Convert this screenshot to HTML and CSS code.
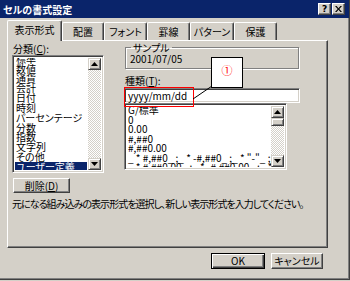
FILE: index.html
```html
<!DOCTYPE html>
<html lang="ja">
<head>
<meta charset="utf-8">
<title>セルの書式設定</title>
<link rel="stylesheet" href="styles.css">
</head>
<body>
<div class="window">
  <div class="titlebar">
    <span class="title">セルの書式設定</span>
    <div class="caption-btns">
      <span class="cap-btn help">?</span>
      <span class="cap-btn close"><svg width="7" height="6" viewBox="0 0 7 6"><path d="M0 0h1.6L3.5 2.2 5.4 0H7L4.3 3 7 6H5.4L3.5 3.8 1.6 6H0L2.7 3z" fill="#000"/></svg></span>
    </div>
  </div>

  <div class="tabs">
    <div class="tab active w1">表示形式</div>
    <div class="tab w2">配置</div>
    <div class="tab w3">フォント</div>
    <div class="tab w4">罫線</div>
    <div class="tab w5">パターン</div>
    <div class="tab w6">保護</div>
  </div>

  <div class="panel">
    <div class="top-row">
      <div class="left-col">
        <div class="label">分類(<u>C</u>):</div>
        <div class="listbox cat-list">
          <div class="items cat-items">
            <div class="item">標準</div>
            <div class="item">数値</div>
            <div class="item">通貨</div>
            <div class="item">会計</div>
            <div class="item">日付</div>
            <div class="item">時刻</div>
            <div class="item">パーセンテージ</div>
            <div class="item">分数</div>
            <div class="item">指数</div>
            <div class="item">文字列</div>
            <div class="item">その他</div>
            <div class="item selected">ユーザー定義</div>
          </div>
          <div class="scrollbar">
            <div class="sb-btn"><svg width="7" height="4" viewBox="0 0 7 4"><path d="M3.5 0L7 4H0z" fill="#000"/></svg></div>
            <div class="sb-track"></div>
            <div class="sb-btn"><svg width="7" height="4" viewBox="0 0 7 4"><path d="M0 0h7L3.5 4z" fill="#000"/></svg></div>
          </div>
        </div>
      </div>

      <div class="right-col">
        <fieldset class="sample">
          <legend>サンプル</legend>
          <div class="sample-value">2001/07/05</div>
        </fieldset>
        <div class="label type-label">種類(<u>T</u>):</div>
        <div class="textbox">yyyy/mm/dd</div>
        <div class="listbox fmt-list">
          <div class="items fmt-items">
            <div class="item">G/標準</div>
            <div class="item">0</div>
            <div class="item">0.00</div>
            <div class="item">#,##0</div>
            <div class="item">#,##0.00</div>
            <div class="item">_ * #,##0_ ;_ * -#,##0_ ;_ * "-"_ ;_ @_</div>
            <div class="item">_ * #,##0.00_ ;_ * -#,##0.00_ ;_ * "-"??_ ;_ @_</div>
          </div>
          <div class="scrollbar">
            <div class="sb-btn"><svg width="7" height="4" viewBox="0 0 7 4"><path d="M3.5 0L7 4H0z" fill="#000"/></svg></div>
            <div class="sb-thumb"></div>
            <div class="sb-track"></div>
            <div class="sb-btn"><svg width="7" height="4" viewBox="0 0 7 4"><path d="M0 0h7L3.5 4z" fill="#000"/></svg></div>
          </div>
        </div>
      </div>
    </div>

    <div class="btn delete-btn">削除(<u>D</u>)</div>
    <p class="desc">元になる組み込みの表示形式を選択し、新しい表示形式を入力してください。</p>
  </div>

  <div class="dialog-buttons">
    <div class="btn default ok-btn">OK</div>
    <div class="btn cancel-btn">キャンセル</div>
  </div>

  <div class="red-mark"></div>
  <svg class="callout-line" width="24" height="18" viewBox="0 0 24 18"><line x1="21" y1="1" x2="2" y2="14" stroke="#000" stroke-width="1"/></svg>
  <div class="callout">①</div>
</div>
</body>
</html>
```

FILE: styles.css
```css
* { box-sizing: border-box; }

html, body {
  margin: 0;
  padding: 0;
}

body {
  width: 350px;
  height: 281px;
  overflow: hidden;
  background: #d4d0c8;
  font-family: "Noto Sans CJK JP", "Noto Sans", sans-serif;
  font-size: 10px;
  line-height: 11px;
  font-feature-settings: "palt";
  color: #000;
}

.window {
  position: relative;
  width: 350px;
  height: 280px;
  background: #d4d0c8;
  border-right: 1px solid #404040;
  border-bottom: 1px solid #404040;
  box-shadow: inset -1px -1px 0 #808080;
}

/* title bar */
.titlebar {
  height: 18px;
  background: #0a246a;
  display: flex;
  align-items: center;
  justify-content: space-between;
  padding: 0 4px 0 3px;
}

.title {
  color: #fff;
  font-weight: bold;
  font-size: 10px;
}

.caption-btns {
  display: flex;
  gap: 1px;
}

.cap-btn {
  width: 13px;
  height: 12px;
  background: #d4d0c8;
  border: 1px solid;
  border-color: #fff #404040 #404040 #fff;
  box-shadow: inset -1px -1px 0 #808080;
  display: flex;
  align-items: center;
  justify-content: center;
  font-family: "DejaVu Sans", sans-serif;
  font-weight: bold;
  font-size: 9px;
  line-height: 9px;
}

/* tabs */
.tabs {
  display: flex;
  align-items: flex-end;
  height: 22px;
  padding-left: 7px;
}

.tab {
  height: 18px;
  border-top: 1px solid #fff;
  border-left: 1px solid #fff;
  border-right: 1px solid #404040;
  box-shadow: inset -1px 0 0 #808080;
  border-top-left-radius: 2px;
  border-top-right-radius: 2px;
  display: flex;
  align-items: center;
  justify-content: center;
  padding-bottom: 1px;
  background: #d4d0c8;
}

.tab.active {
  height: 21px;
  margin-bottom: -1px;
  position: relative;
  z-index: 1;
  padding-bottom: 3px;
}

.w1 { width: 55px; }
.w2 { width: 42px; }
.w3 { width: 43px; }
.w4 { width: 43px; }
.w5 { width: 44px; }
.w6 { width: 43px; }

/* panel */
.panel {
  margin-left: 7px;
  width: 321px;
  height: 208px;
  border-top: 1px solid #fff;
  border-left: 1px solid #fff;
  border-right: 1px solid #404040;
  border-bottom: 1px solid #404040;
  box-shadow: inset -1px -1px 0 #808080;
  padding: 2px 0 0 4px;
}

.top-row {
  display: flex;
  align-items: flex-start;
}

.left-col {
  width: 92px;
}

.label {
  height: 12px;
  line-height: 11px;
  padding-left: 1px;
}

.right-col {
  width: 176px;
  margin-left: 20px;
}

/* sunken controls */
.listbox,
.textbox {
  background: #fff;
  border: 1px solid;
  border-color: #808080 #fff #fff #808080;
  box-shadow: inset 1px 1px 0 #404040, inset -1px -1px 0 #d4d0c8;
}

.listbox {
  display: flex;
  padding: 2px;
  overflow: hidden;
}

.cat-list {
  height: 118px;
}

.items {
  flex: 1;
  min-width: 0;
  overflow: hidden;
}

.item {
  white-space: pre;
}

.cat-items .item {
  height: 9.8px;
  line-height: 10px;
  padding-left: 1px;
}

.cat-items .item:first-child {
  margin-top: -4px;
}

.item.selected {
  background: #0a246a;
  color: #fff;
  margin-right: 1px;
}

.scrollbar {
  width: 13px;
  flex: none;
  display: flex;
  flex-direction: column;
}

.sb-btn {
  height: 12px;
  flex: none;
  background: #d4d0c8;
  border: 1px solid;
  border-color: #d4d0c8 #404040 #404040 #d4d0c8;
  box-shadow: inset 1px 1px 0 #fff, inset -1px -1px 0 #808080;
  display: flex;
  align-items: center;
  justify-content: center;
}

.sb-thumb {
  height: 8px;
  flex: none;
  background: #d4d0c8;
  border: 1px solid;
  border-color: #d4d0c8 #404040 #404040 #d4d0c8;
  box-shadow: inset 1px 1px 0 #fff, inset -1px -1px 0 #808080;
}

.sb-track {
  flex: 1;
  background: repeating-conic-gradient(#fff 0 25%, #d4d0c8 0 50%) 0 0 / 2px 2px;
}

/* sample group */
.sample {
  margin: 0 0 0 1px;
  padding: 0 0 0 4px;
  width: 174px;
  height: 26px;
  border: 1px solid #808080;
  box-shadow: inset 1px 1px 0 #fff, 1px 1px 0 #fff;
}

.sample legend {
  padding: 0 2px;
  margin-left: 1px;
  line-height: 9px;
  font-size: 10px;
}

.sample-value {
  line-height: 11px;
  margin-top: 1px;
}

.type-label {
  margin-top: 5px;
  height: 14px;
  line-height: 14px;
}

.textbox {
  height: 15px;
  width: 176px;
  padding: 1px 0 0 3px;
  line-height: 12px;
}

.fmt-list {
  width: 163px;
  height: 67px;
}

.fmt-items .item {
  height: 9.5px;
  line-height: 10px;
  padding-left: 1px;
}

.fmt-items .item:first-child {
  margin-top: -1px;
}

/* buttons */
.btn {
  background: #d4d0c8;
  border: 1px solid;
  border-color: #fff #404040 #404040 #fff;
  box-shadow: inset -1px -1px 0 #808080;
  display: flex;
  align-items: center;
  justify-content: center;
  line-height: 10px;
}

.delete-btn {
  width: 57px;
  height: 15px;
  margin: 5px 0 0 1px;
}

.desc {
  margin: 5px 0 0 0;
  line-height: 11px;
  letter-spacing: -0.95px;
  white-space: nowrap;
}

.dialog-buttons {
  display: flex;
  justify-content: flex-end;
  gap: 6px;
  padding-right: 26px;
  margin-top: 5px;
}

.ok-btn {
  width: 54px;
  height: 16px;
}

.btn.default {
  border-color: #000;
  box-shadow: inset 1px 1px 0 #fff, inset -1px -1px 0 #404040, inset -2px -2px 0 #808080;
}

.cancel-btn {
  width: 52px;
  height: 16px;
}

/* annotations */
.red-mark {
  position: absolute;
  left: 124px;
  top: 87px;
  width: 70px;
  height: 20px;
  border: 1px solid #f00;
}

.callout-line {
  position: absolute;
  left: 191px;
  top: 85px;
}

.callout {
  position: absolute;
  left: 211px;
  top: 57px;
  width: 32px;
  height: 31px;
  background: #fff;
  border: 1px solid #000;
  color: #f00;
  font-size: 11px;
  display: flex;
  align-items: center;
  justify-content: center;
  padding-bottom: 4px;
}
```
